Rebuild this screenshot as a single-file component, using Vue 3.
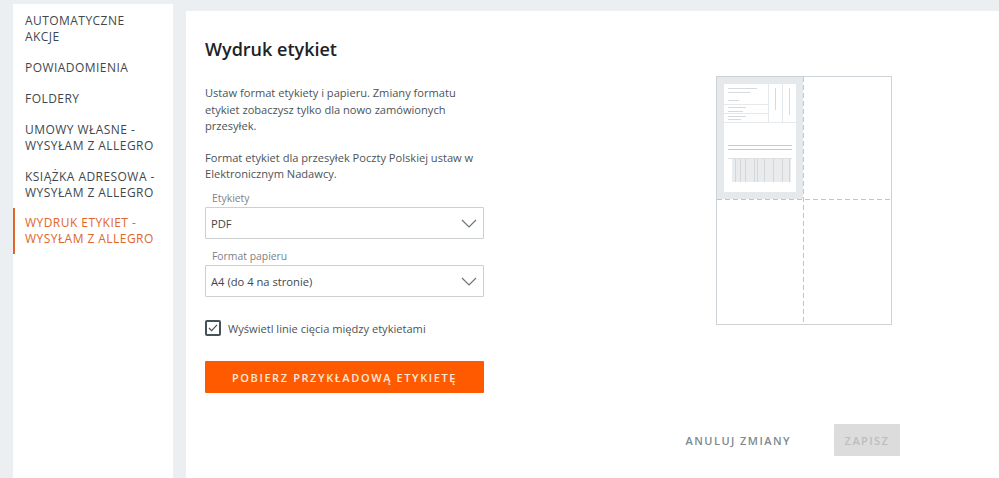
<script setup>
import { ref } from 'vue'

const navItems = [
  { label: 'Automatyczne akcje' },
  { label: 'Powiadomienia' },
  { label: 'Foldery' },
  { label: 'Umowy własne - wysyłam z Allegro' },
  { label: 'Książka adresowa - wysyłam z Allegro' },
  { label: 'Wydruk etykiet - wysyłam z Allegro', active: true }
]

const showCutLines = ref(true)

// paski kodu w podgladzie etykiety
const barcode = []
let bx = 732.5
for (let i = 0; bx < 791; i++) {
  const wide = i % 4 === 1 || i % 7 === 3
  barcode.push({ x: bx, w: wide ? 2 : 1 })
  bx += wide ? 3 : 2
}
</script>

<template>
  <div class="page">
    <aside class="sidebar">
      <a v-for="item in navItems" :key="item.label" class="nav-item" :class="{ active: item.active }">
        {{ item.label }}
      </a>
    </aside>

    <main class="panel">
      <div class="content">
        <section class="form">
          <h1>Wydruk etykiet</h1>
          <p class="desc">Ustaw format etykiety i papieru. Zmiany formatu etykiet zobaczysz tylko dla nowo zamówionych przesyłek.</p>
          <p class="desc second">Format etykiet dla przesyłek Poczty Polskiej ustaw w Elektronicznym Nadawcy.</p>

          <label class="field-label">Etykiety</label>
          <div class="select">
            <span>PDF</span>
            <svg width="16" height="9" viewBox="0 0 16 9"><path d="M1 1l7 7 7-7" fill="none" stroke="#6d7478" stroke-width="1.2" /></svg>
          </div>

          <label class="field-label">Format papieru</label>
          <div class="select">
            <span>A4 (do 4 na stronie)</span>
            <svg width="16" height="9" viewBox="0 0 16 9"><path d="M1 1l7 7 7-7" fill="none" stroke="#6d7478" stroke-width="1.2" /></svg>
          </div>

          <div class="check-row" @click="showCutLines = !showCutLines">
            <span class="checkbox">
              <svg v-if="showCutLines" width="10" height="8" viewBox="0 0 11 9"><path d="M1 4.5l3 3 6-6.5" fill="none" stroke="#3f4a52" stroke-width="1.2" /></svg>
            </span>
            <span>Wyświetl linie cięcia między etykietami</span>
          </div>

          <button class="primary">Pobierz przykładową etykietę</button>
        </section>

        <svg class="preview" width="176" height="249" viewBox="716 76 176 249">
          <rect x="716.5" y="76.5" width="175" height="248" fill="#fff" stroke="#ccd2d6" />
          <rect x="717" y="77" width="86" height="122" fill="#e6e9ec" />
          <rect x="724" y="84" width="72" height="108" fill="#fff" />
          <path d="M724 104.5h45M724 113.5h45M724 122.5h72M768.5 84v39M782.5 84v39" fill="none" stroke="#e6e9ec" />
          <path d="M728 88.5h29M728 92.5h22M728 100.5h11M728 107.5h18M728 111.5h15M728 116.5h18M728 119.5h13M775.5 88v22M789.5 88v27" fill="none" stroke="#d5dade" />
          <path d="M728 145.5h64M728 149.5h64" stroke="#c6ccd2" />
          <path d="M728 158.5h64" stroke="#dde1e4" />
          <rect v-for="b in barcode" :key="b.x" :x="b.x" y="159" :width="b.w" height="23" fill="#d3d7da" />
          <path d="M803.5 77v247M717 199.5h174" stroke="#bfc5c9" stroke-dasharray="5 3" fill="none" />
        </svg>
      </div>

      <footer class="actions">
        <button class="link">Anuluj zmiany</button>
        <button class="save" disabled>Zapisz</button>
      </footer>
    </main>
  </div>
</template>

<style>
body {
  margin: 0;
  background: #eceff1;
}
</style>

<style scoped>
.page {
  display: flex;
  align-items: flex-start;
  gap: 13px;
  height: 478px;
  padding-left: 13px;
  overflow: hidden;
  font-family: "Open Sans", "Liberation Sans", sans-serif;
  color: #3f474d;
  box-sizing: border-box;
}

.sidebar {
  width: 160px;
  height: 474px;
  margin-top: 4px;
  background: #fff;
  display: flex;
  flex-direction: column;
  gap: 15px;
  padding-top: 9px;
  box-sizing: border-box;
}

.nav-item {
  display: block;
  padding: 0 12px;
  font-size: 12px;
  line-height: 16px;
  letter-spacing: 0.45px;
  text-transform: uppercase;
  color: #3f474d;
}

.nav-item.active {
  color: #e0662a;
  border-left: 2px solid #e0662a;
  padding: 7px 12px 7px 10px;
  margin-top: -8px;
}

.panel {
  flex: 1;
  height: 467px;
  margin-top: 11px;
  background: #fff;
  display: flex;
  flex-direction: column;
  padding: 0 99px 0 19px;
  box-sizing: border-box;
}

.content {
  display: flex;
  justify-content: space-between;
  align-items: flex-start;
}

.form {
  width: 279px;
}

h1 {
  margin: 26px 0 0;
  font-size: 18px;
  line-height: 24px;
  font-weight: 600;
  color: #1d2327;
}

.desc {
  margin: 24px 0 0;
  font-size: 11.1px;
  line-height: 16.5px;
  color: #4c5357;
}

.desc.second {
  margin-top: 15px;
}

.field-label {
  display: block;
  margin: 12px 0 1px 7px;
  font-size: 10.4px;
  line-height: 16px;
  color: #7b8287;
}

.desc.second + .field-label {
  margin-top: 7.5px;
}

.select {
  display: flex;
  align-items: center;
  justify-content: space-between;
  height: 32px;
  padding: 0 6px 0 5px;
  border: 1px solid #ccd0d3;
  border-radius: 1px;
  font-size: 11.2px;
  color: #3f474d;
  box-sizing: border-box;
}

.select + .field-label {
  margin-top: 9px;
}

.check-row {
  display: flex;
  align-items: center;
  gap: 7px;
  margin-top: 23px;
  font-size: 11.1px;
  color: #4c5357;
}

.checkbox {
  display: flex;
  align-items: center;
  justify-content: center;
  width: 16px;
  height: 16px;
  border: 2px solid #46525a;
  border-radius: 2px;
  box-sizing: border-box;
}

.primary {
  display: block;
  width: 100%;
  height: 32px;
  margin-top: 25px;
  border: 0;
  border-radius: 1px;
  background: #ff5a00;
  color: #fbe9dd;
  font: 600 11px "Open Sans", "Liberation Sans", sans-serif;
  letter-spacing: 1.6px;
  text-transform: uppercase;
}

.preview {
  display: block;
  margin: 65px 8px 0 0;
}

.actions {
  display: flex;
  justify-content: flex-end;
  align-items: center;
  gap: 43px;
  margin-top: auto;
  margin-bottom: 22px;
}

.link,
.save {
  font: 600 11px "Open Sans", "Liberation Sans", sans-serif;
  letter-spacing: 1.45px;
  text-transform: uppercase;
  border: 0;
  padding: 0;
}

.link {
  background: none;
  color: #7d8a8e;
}

.save {
  width: 66px;
  height: 32px;
  background: #dcdcdc;
  color: #bdbdbd;
  border-radius: 1px;
}
</style>
